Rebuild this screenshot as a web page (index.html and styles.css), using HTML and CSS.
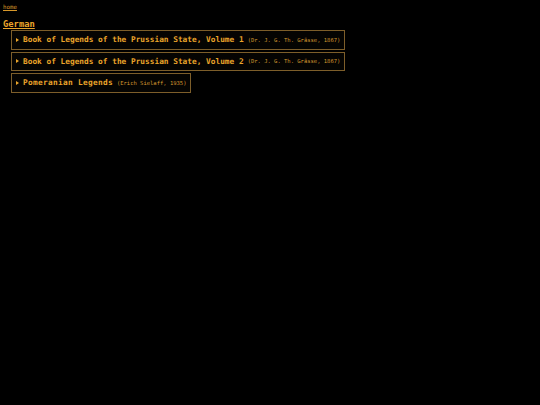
FILE: index.html
```html
<!DOCTYPE html>
<html>
<head>
<meta charset="utf-8">
<link rel="stylesheet" href="styles.css">
</head>
<body>
<a class="home" href="#">home</a>
<h2 class="lang">German</h2>
<div class="list">
  <div class="item"><span class="tri"></span><span class="title">Book of Legends of the Prussian State, Volume 1</span><span class="meta">(Dr. J. G. Th. Grässe, 1867)</span></div>
  <div class="item"><span class="tri"></span><span class="title">Book of Legends of the Prussian State, Volume 2</span><span class="meta">(Dr. J. G. Th. Grässe, 1867)</span></div>
  <div class="item"><span class="tri"></span><span class="title wide">Pomeranian Legends</span><span class="meta">(Erich Sielaff, 1935)</span></div>
</div>
</body>
</html>
```
FILE: styles.css
```css
html, body {
  margin: 0;
  background: #000;
}
body {
  padding: 3px 3px;
  color: #eba52a;
  font-family: "DejaVu Sans Mono", "Liberation Mono", monospace;
}
.home {
  display: block;
  font-size: 5.8px;
  line-height: 8px;
  color: #d8982a;
  text-decoration: underline;
}
.lang {
  margin: 8px 0 0 0;
  font-size: 8.8px;
  line-height: 10px;
  font-weight: bold;
  text-decoration: underline;
}
.list {
  display: flex;
  flex-direction: column;
  align-items: flex-start;
  gap: 2px;
  margin: 1px 0 0 8px;
}
.item {
  display: flex;
  align-items: center;
  border: 1px solid #7d5e2a;
  background: #050402;
  padding: 0 4px 0 4px;
  height: 17.5px;
}
.tri {
  width: 0;
  height: 0;
  border-left: 3px solid #eba52a;
  border-top: 2px solid transparent;
  border-bottom: 2px solid transparent;
  margin-right: 4px;
}
.title {
  font-size: 7.8px;
  font-weight: bold;
}
.title.wide {
  letter-spacing: 0.3px;
}
.meta {
  font-size: 5.5px;
  margin-left: 4px;
  color: #d89a30;
}
```
